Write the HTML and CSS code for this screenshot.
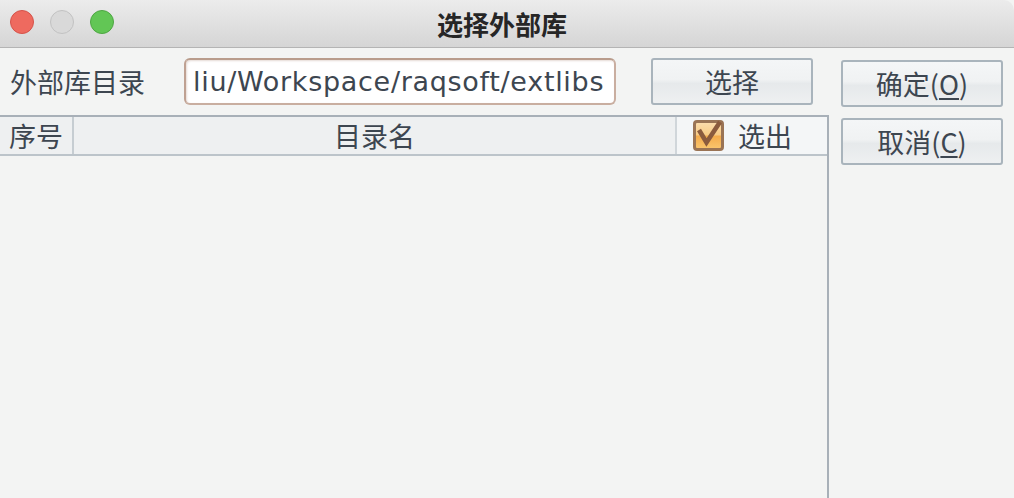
FILE: index.html
```html
<!DOCTYPE html>
<html>
<head>
<meta charset="utf-8">
<link rel="stylesheet" href="styles.css">
</head>
<body>
<div class="window">
  <div class="titlebar">
    <div class="lights">
      <span class="light red"></span>
      <span class="light gray"></span>
      <span class="light green"></span>
    </div>
    <div class="title">选择外部库</div>
  </div>
  <div class="content">
    <div class="left">
      <div class="formrow">
        <div class="label">外部库目录</div>
        <div class="input"><span class="inputtext">liu/Workspace/raqsoft/extlibs</span></div>
        <div class="btn choose">选择</div>
      </div>
      <div class="table">
        <div class="thead">
          <div class="th col1">序号</div>
          <div class="th col2">目录名</div>
          <div class="th col3">
            <span class="check">
              <svg width="31" height="31" viewBox="0 0 31 31"><path d="M6 10 L13.5 22.5 L27 2" fill="none" stroke="#8b5b3d" stroke-width="4.6" stroke-linecap="butt" stroke-linejoin="miter"/></svg>
            </span>
            <span>选出</span>
          </div>
        </div>
        <div class="tbody"></div>
      </div>
    </div>
    <div class="right">
      <div class="btn side">确定(<u>O</u>)</div>
      <div class="btn side">取消(<u>C</u>)</div>
    </div>
  </div>
</div>
</body>
</html>
```
FILE: styles.css
```css
html, body {
  margin: 0;
  padding: 0;
}
body {
  width: 1014px;
  height: 498px;
  overflow: hidden;
  background: #f3f4f3;
  font-family: "DejaVu Sans", "Noto Sans CJK SC", sans-serif;
  color: #3d4650;
}
.window {
  display: flex;
  flex-direction: column;
  height: 498px;
}
.titlebar {
  height: 47px;
  border-bottom: 1px solid #b4b4b4;
  background: linear-gradient(#ececec, #d5d5d5);
  position: relative;
  display: flex;
  align-items: center;
  justify-content: center;
  border-top-right-radius: 10px;
}
.lights {
  position: absolute;
  left: 10px;
  top: 10px;
  display: flex;
  gap: 16px;
}
.light {
  width: 24px;
  height: 24px;
  border-radius: 50%;
  box-sizing: border-box;
}
.red { background: #ee6a5f; border: 1px solid #d5534a; }
.gray { background: #d9d9d9; border: 1px solid #c2c2c2; }
.green { background: #62c655; border: 1px solid #4ea643; }
.title {
  font-family: "Noto Sans CJK SC", sans-serif;
  font-weight: bold;
  font-size: 26px;
  color: #262626;
  margin-right: 10px;
}
.content {
  flex: 1;
  display: flex;
}
.left {
  width: 829px;
  display: flex;
  flex-direction: column;
}
.formrow {
  display: flex;
  align-items: center;
  height: 47px;
  margin-top: 10px;
}
.label {
  font-family: "Noto Sans CJK SC", sans-serif;
  font-size: 27px;
  margin-left: 10px;
  width: 174px;
}
.input {
  width: 432px;
  height: 47px;
  box-sizing: border-box;
  border: 2px solid #c9aea0;
  border-top-color: #b99c8c;
  border-left-color: #bfa192;
  border-radius: 6px;
  background: #ffffff;
  box-shadow: inset 1px 1px 2px rgba(150, 110, 90, 0.25);
  display: flex;
  align-items: center;
  padding-left: 7px;
  overflow: hidden;
  white-space: nowrap;
}
.inputtext {
  font-size: 27px;
  letter-spacing: 0.7px;
  color: #3d4650;
}
.btn {
  width: 162px;
  height: 47px;
  box-sizing: border-box;
  border: 2px solid #a9b4bc;
  border-radius: 3px;
  background: linear-gradient(#f4f6f7 0%, #f0f2f3 45%, #e6e9eb 55%, #eef0f1 100%);
  display: flex;
  align-items: center;
  justify-content: center;
  font-family: "Noto Sans CJK SC", sans-serif;
  font-size: 27px;
  color: #3d4650;
}
.choose {
  margin-left: 35px;
}
.btn u {
  text-underline-offset: 3px;
}
.table {
  flex: 1;
  margin-top: 10px;
  border-right: 2px solid #a8b0b8;
  display: flex;
  flex-direction: column;
}
.thead {
  display: flex;
  height: 37px;
  border-top: 2px solid #a8b0b8;
  border-bottom: 2px solid #bcc4ca;
  background: #eef0f1;
}
.th {
  font-family: "Noto Sans CJK SC", sans-serif;
  font-size: 27px;
  display: flex;
  align-items: center;
  box-sizing: border-box;
}
.col1 {
  width: 74px;
  padding-left: 9px;
  border-right: 2px solid #c6cdd2;
}
.col2 {
  width: 603px;
  justify-content: center;
  border-right: 2px solid #d0d6da;
}
.col3 {
  flex: 1;
  background: #f4f6f7;
  padding-left: 16px;
  gap: 14px;
}
.check {
  width: 31px;
  height: 31px;
  box-sizing: border-box;
  border: 3px solid #9a7455;
  border-radius: 4px;
  background: linear-gradient(#fbdcaa 0%, #f8cb85 48%, #f4ab4b 52%, #f9c46c 100%);
  position: relative;
  overflow: visible;
}
.check svg {
  position: absolute;
  left: -3px;
  top: -3px;
  overflow: visible;
}
.tbody {
  flex: 1;
}
.right {
  margin-left: 12px;
  padding-top: 12px;
  display: flex;
  flex-direction: column;
  gap: 11px;
}
```
